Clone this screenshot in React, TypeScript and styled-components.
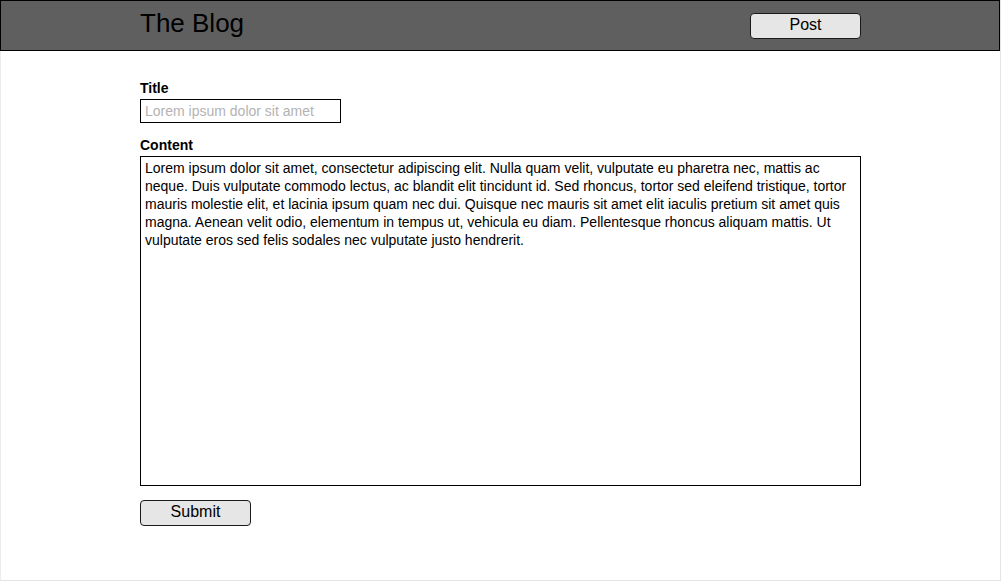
import { createGlobalStyle, styled } from "styled-components";

const GlobalStyle = createGlobalStyle`
  body {
    margin: 0;
    background: #ffffff;
    font-family: "Liberation Sans", Arial, sans-serif;
  }
`;

const Page = styled.div`
  width: 1001px;
  height: 581px;
  box-sizing: border-box;
  border-left: 1px solid #ececec;
  border-right: 1px solid #e4e4e4;
  border-bottom: 1px solid #e4e4e4;
  background: #ffffff;
`;

const Header = styled.header`
  margin-left: -1px;
  height: 51px;
  box-sizing: border-box;
  border: 1px solid #000000;
  background: #5f5f5f;
  padding-left: 139px;
`;

const HeaderInner = styled.div`
  width: 721px;
  display: flex;
  justify-content: space-between;
  align-items: flex-start;
`;

const Brand = styled.h1`
  margin: 9px 0 0 0;
  font-size: 26px;
  line-height: 26px;
  font-weight: normal;
  color: #000000;
`;

const Button = styled.button<{ $top?: number }>`
  margin-top: ${(p) => p.$top ?? 0}px;
  width: 111px;
  height: 26px;
  box-sizing: border-box;
  padding: 0 0 2px 0;
  border: 1px solid #1a1a1a;
  border-radius: 4px;
  background: #e6e6e6;
  font-family: "Liberation Sans", Arial, sans-serif;
  font-size: 16px;
  color: #000000;
  cursor: pointer;
`;

const Form = styled.form`
  padding: 29px 0 0 139px;
  width: 721px;
  display: flex;
  flex-direction: column;
`;

const Field = styled.div`
  display: flex;
  flex-direction: column;
  gap: 3px;
  margin-bottom: 14px;
`;

const Label = styled.label`
  font-size: 14px;
  line-height: 16px;
  font-weight: bold;
  color: #000000;
`;

const TextInput = styled.input`
  width: 201px;
  height: 24px;
  box-sizing: border-box;
  margin: 0;
  padding: 0 4px;
  border: 1px solid #000000;
  border-radius: 0;
  outline: none;
  font-family: "Liberation Sans", Arial, sans-serif;
  font-size: 14px;
  color: #000000;

  &::placeholder {
    color: #b3b3b3;
  }
`;

const TextArea = styled.textarea`
  width: 721px;
  height: 330px;
  box-sizing: border-box;
  margin: 0;
  padding: 2px 4px;
  border: 1px solid #000000;
  border-radius: 0;
  outline: none;
  resize: none;
  overflow: hidden;
  font-family: "Liberation Sans", Arial, sans-serif;
  font-size: 14px;
  line-height: 18px;
  color: #000000;
`;

const content =
  "Lorem ipsum dolor sit amet, consectetur adipiscing elit. Nulla quam velit, vulputate eu pharetra nec, mattis ac neque. Duis vulputate commodo lectus, ac blandit elit tincidunt id. Sed rhoncus, tortor sed eleifend tristique, tortor mauris molestie elit, et lacinia ipsum quam nec dui. Quisque nec mauris sit amet elit iaculis pretium sit amet quis magna. Aenean velit odio, elementum in tempus ut, vehicula eu diam. Pellentesque rhoncus aliquam mattis. Ut vulputate eros sed felis sodales nec vulputate justo hendrerit.";

const App = (): JSX.Element => {
  return (
    <>
      <GlobalStyle />
      <Page>
        <Header>
          <HeaderInner>
            <Brand>The Blog</Brand>
            <Button type="button" $top={12}>
              Post
            </Button>
          </HeaderInner>
        </Header>

        <Form onSubmit={(e) => e.preventDefault()}>
          <Field>
            <Label htmlFor="title">Title</Label>
            <TextInput id="title" placeholder="Lorem ipsum dolor sit amet" />
          </Field>
          <Field>
            <Label htmlFor="content">Content</Label>
            <TextArea id="content" defaultValue={content} spellCheck={false} />
          </Field>
          <div>
            <Button type="submit">Submit</Button>
          </div>
        </Form>
      </Page>
    </>
  );
};

export default App;
